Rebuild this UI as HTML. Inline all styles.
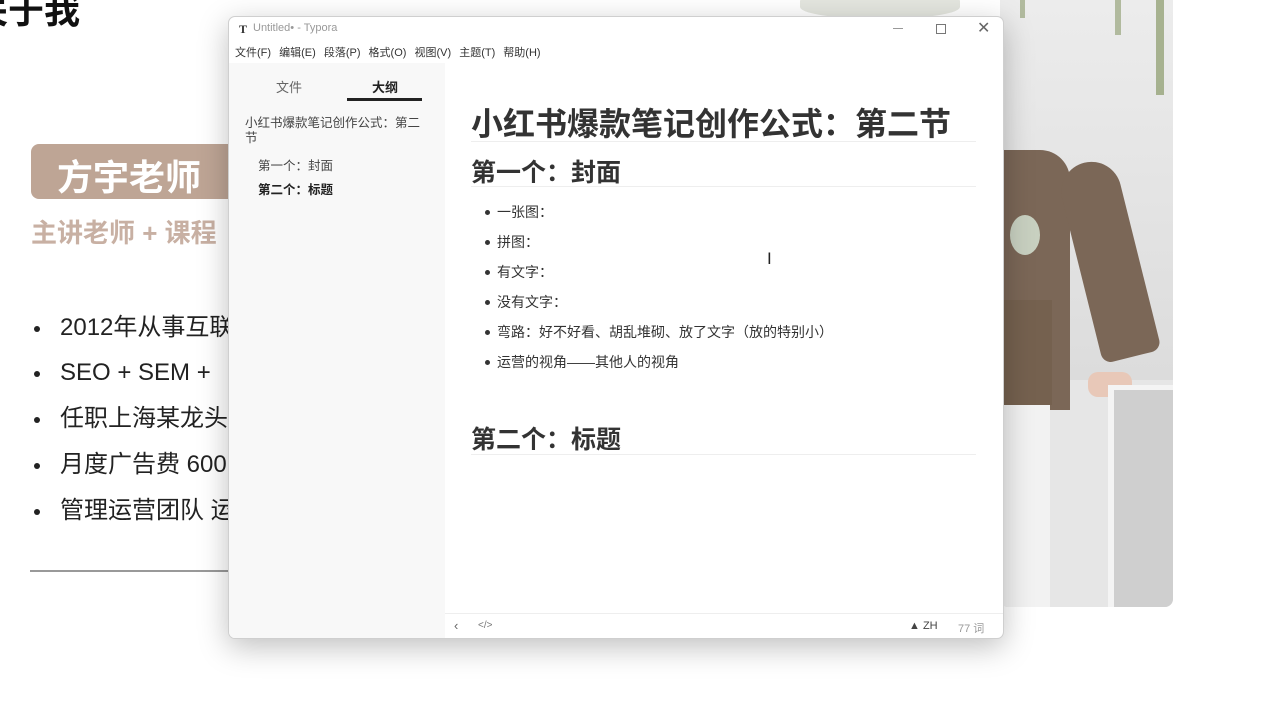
<!DOCTYPE html>
<html><head><meta charset="utf-8"><style>
*{margin:0;padding:0;box-sizing:border-box}
body{width:1280px;height:718px;background:#fff;position:relative;overflow:hidden;font-family:"Liberation Sans","Noto Sans CJK SC",sans-serif;color:#333}
.abs{position:absolute}
.bl{position:absolute;left:31px;font-size:24px;line-height:32px;color:#222;white-space:nowrap}
.bl:before{content:"";position:absolute;left:3px;top:14px;width:6px;height:6px;border-radius:50%;background:#222}
.bl span{margin-left:29px}
.win{position:absolute;left:228px;top:16px;width:776px;height:623px;background:#fff;border:1px solid #cfcfcf;border-radius:7px;box-shadow:0 8px 30px rgba(0,0,0,.25);overflow:hidden}
.side{position:absolute;left:0;top:46px;width:216px;bottom:0;background:#f8f8f8}
.li{position:absolute;left:497px;font-size:14px;line-height:20px;color:#333;white-space:nowrap;z-index:5}
.li:before{content:"";position:absolute;left:-12px;top:8px;width:5px;height:5px;border-radius:50%;background:#333}
</style></head><body>
<div class="abs" style="left:-28px;top:-18px;font-size:36px;font-weight:bold;color:#111">关于我</div>
<div class="abs" style="left:31px;top:144px;width:210px;height:55px;background:#bea595;border-radius:8px"></div>
<div class="abs" style="left:57px;top:149px;font-size:36px;font-weight:bold;color:#fff">方宇老师</div>
<div class="abs" style="left:31px;top:213px;font-size:26px;font-weight:bold;color:#c8b0a3;white-space:nowrap">主讲老师 + 课程</div>
<div class="bl" style="top:312px"><span>2012年从事互联</span></div>
<div class="bl" style="top:357px"><span>SEO + SEM + </span></div>
<div class="bl" style="top:403px"><span>任职上海某龙头</span></div>
<div class="bl" style="top:449px"><span>月度广告费 600</span></div>
<div class="bl" style="top:495px"><span>管理运营团队 运</span></div>
<div class="abs" style="left:30px;top:570px;width:200px;height:2px;background:#999"></div>
<div class="abs" style="left:800px;top:-10px;width:160px;height:28px;background:#e4e6df;border-radius:40%"></div>
<div class="abs" style="left:1000px;top:0;width:173px;height:607px;background:#e6e6e6;border-radius:0 0 8px 8px;overflow:hidden">
 <div class="abs" style="left:0;top:0;width:173px;height:380px;background:linear-gradient(#ececec,#dcdcdc)"></div>
 <div class="abs" style="left:156px;top:0;width:8px;height:95px;background:#8a9a6a;opacity:.7"></div>
 <div class="abs" style="left:115px;top:0;width:6px;height:35px;background:#8a9a6a;opacity:.6"></div>
 <div class="abs" style="left:20px;top:0;width:5px;height:18px;background:#8a9a6a;opacity:.6"></div>
 <div class="abs" style="left:0;top:150px;width:70px;height:260px;background:#7b6757;border-radius:0 30px 0 0"></div>
 <div class="abs" style="left:55px;top:170px;width:60px;height:200px;background:#7b6757;border-radius:30px 30px 10px 10px;transform:rotate(-14deg);transform-origin:top left"></div>
 <div class="abs" style="left:0;top:300px;width:52px;height:105px;background:#75614f"></div>
 <div class="abs" style="left:88px;top:372px;width:44px;height:25px;background:#e8c8b8;border-radius:10px"></div>
 <div class="abs" style="left:0;top:405px;width:50px;height:202px;background:#f2f2f2"></div>
 <div class="abs" style="left:108px;top:385px;width:65px;height:222px;background:#cfcfcf;border-left:6px solid #f4f4f4;border-top:5px solid #f4f4f4"></div>
 <div class="abs" style="left:10px;top:215px;width:30px;height:40px;background:#c8d0c0;border-radius:50%"></div>
</div>
<div class="win">
 <div class="abs" style="left:10px;top:5px;font-size:12px;font-family:'Liberation Serif',serif;font-weight:bold;color:#333">T</div>
 <div class="abs" style="left:24px;top:5px;font-size:11px;color:#999">Untitled• - Typora</div>
 <div class="abs" style="left:664px;top:11px;width:10px;height:1px;background:#999"></div>
 <div class="abs" style="left:707px;top:7px;width:10px;height:10px;border:1px solid #777"></div>
 <div class="abs" style="left:748px;top:1px;font-size:16px;color:#666">✕</div>
 <div class="abs" style="left:6px;top:27px;font-size:11px;color:#333;word-spacing:5px;white-space:nowrap">文件(F) 编辑(E) 段落(P) 格式(O) 视图(V) 主题(T) 帮助(H)</div>
 <div class="side">
  <div class="abs" style="left:47px;top:14px;font-size:13px;color:#666">文件</div>
  <div class="abs" style="left:143px;top:14px;font-size:13px;font-weight:bold;color:#222">大纲</div>
  <div class="abs" style="left:118px;top:35px;width:75px;height:3px;background:#222"></div>
  <div class="abs" style="left:16px;top:53px;width:180px;font-size:12.5px;line-height:15px;color:#444">小红书爆款笔记创作公式：第二节</div>
  <div class="abs" style="left:29px;top:92px;font-size:12.5px;color:#444">第一个：封面</div>
  <div class="abs" style="left:29px;top:116px;font-size:12.5px;font-weight:bold;color:#222">第二个：标题</div>
 </div>
 <div class="abs" style="left:242px;top:82px;font-size:32px;font-weight:bold;color:#333;white-space:nowrap">小红书爆款笔记创作公式：第二节</div>
 <div class="abs" style="left:242px;top:124px;width:505px;height:1px;background:#eee"></div>
 <div class="abs" style="left:242px;top:136px;font-size:25px;font-weight:bold;color:#333">第一个：封面</div>
 <div class="abs" style="left:242px;top:169px;width:505px;height:1px;background:#eee"></div>
 <div class="abs" style="left:242px;top:403px;font-size:25px;font-weight:bold;color:#333">第二个：标题</div>
 <div class="abs" style="left:242px;top:437px;width:505px;height:1px;background:#eee"></div>
 <div class="abs" style="left:538px;top:232px;font-size:17px;color:#222">I</div>
 <div class="abs" style="left:216px;top:596px;right:0;height:1px;background:#eee"></div>
 <div class="abs" style="left:225px;top:601px;font-size:13px;color:#666">‹</div>
 <div class="abs" style="left:249px;top:603px;font-size:10px;color:#777">&lt;/&gt;</div>
 <div class="abs" style="left:680px;top:603px;font-size:11px;color:#444">▲ ZH</div>
 <div class="abs" style="left:729px;top:603px;font-size:11px;color:#999">77 词</div>
</div>
<div class="li" style="top:202px">一张图：</div>
<div class="li" style="top:232px">拼图：</div>
<div class="li" style="top:262px">有文字：</div>
<div class="li" style="top:292px">没有文字：</div>
<div class="li" style="top:322px">弯路：好不好看、胡乱堆砌、放了文字（放的特别小）</div>
<div class="li" style="top:352px">运营的视角——其他人的视角</div>
</body></html>
